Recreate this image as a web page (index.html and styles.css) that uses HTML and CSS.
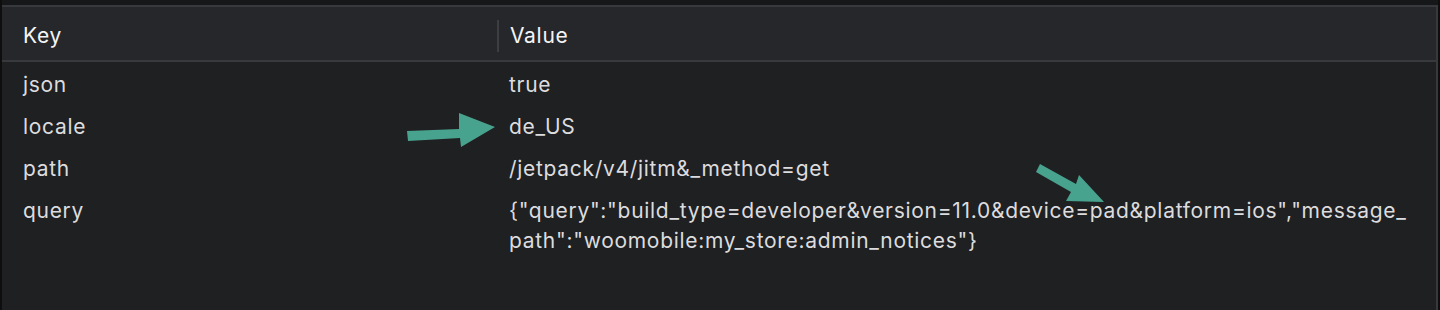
FILE: index.html
```html
<!DOCTYPE html>
<html lang="en">
<head>
    <meta charset="UTF-8">
    <meta name="viewport" content="width=device-width, initial-scale=1.0">
    <title>Query Parameters</title>
    <link rel="stylesheet" href="styles.css">
</head>
<body>
    <div class="panel">
        <div class="topbar"></div>
        <div class="table">
            <div class="head">
                <div class="cell key">Key</div>
                <div class="cell value">Value</div>
            </div>
            <div class="rows">
                <div class="row">
                    <div class="cell key">json</div>
                    <div class="cell value">true</div>
                </div>
                <div class="row">
                    <div class="cell key">locale</div>
                    <div class="cell value">de_US</div>
                </div>
                <div class="row">
                    <div class="cell key">path</div>
                    <div class="cell value">/jetpack/v4/jitm&amp;_method=get</div>
                </div>
                <div class="row">
                    <div class="cell key">query</div>
                    <div class="cell value">{"query":"build_type=developer&amp;version=11.0&amp;device=pad&amp;platform=ios","message_path":"woomobile:my_store:admin_notices"}</div>
                </div>
            </div>
        </div>

        <!-- annotation arrows -->
        <svg class="arrow arrow-locale" width="100" height="40" viewBox="0 0 100 40">
            <polygon points="0,18 52,16 52,0 88,14 54,34 53,25 1,28" fill="#48a38e"/>
        </svg>
        <svg class="arrow arrow-device" width="80" height="50" viewBox="0 0 80 50">
            <polygon points="4,6 40,26 43,17 68,44 30,43 35,34 0,14" fill="#48a38e"/>
        </svg>
    </div>
</body>
</html>
```

FILE: styles.css
```css
* {
    margin: 0;
    padding: 0;
    box-sizing: border-box;
}

body {
    background: #1f2022;
    font-family: 'Inter', 'Liberation Sans', sans-serif;
    height: 310px;
    overflow: hidden;
}

.panel {
    position: relative;
    height: 310px;
    border-left: 2px solid #0e0e0f;
    border-right: 2px solid #0e0e0f;
    display: flex;
    flex-direction: column;
}

.topbar {
    height: 7px;
    background: #161719;
    border-bottom: 2px solid #38393c;
}

.table {
    flex: 1;
    border-right: 2px solid #38393c;
}

.head {
    display: flex;
    align-items: center;
    height: 55px;
    padding-top: 5px;
    background: #26272b;
    border-bottom: 2px solid #38393c;
    color: #f4f4f5;
}

.head .value {
    border-left: 2px solid #3d3e42;
    padding-left: 11px;
    line-height: 32px;
}

.cell {
    font-size: 21px;
    line-height: 30px;
    letter-spacing: 0.7px;
}

.key {
    width: 495px;
    padding-left: 21px;
    flex-shrink: 0;
}

.value {
    flex: 1;
    padding-left: 12px;
    padding-right: 22px;
    word-break: break-all;
}

.row {
    display: flex;
    padding: 8px 0 4px;
    color: #dcdcde;
}

.arrow {
    position: absolute;
}

.arrow-locale {
    left: 405px;
    top: 113px;
}

.arrow-device {
    left: 1034px;
    top: 158px;
}
```
